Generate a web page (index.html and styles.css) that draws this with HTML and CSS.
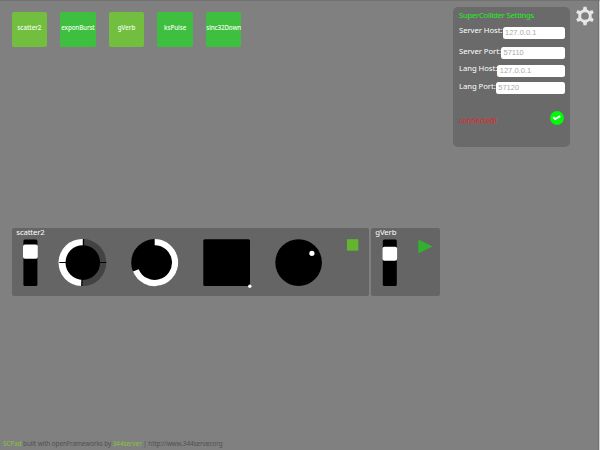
FILE: index.html
```
<!DOCTYPE html>
<html lang="en">
<head>
<meta charset="utf-8">
<title>SCPad</title>
<link rel="stylesheet" href="styles.css">
</head>
<body>
<main class="app">
  <header class="top">
    <nav class="synths">
      <button class="synth active"><span>scatter2</span></button>
      <button class="synth wide"><span>exponBurst</span></button>
      <button class="synth active"><span>gVerb</span></button>
      <button class="synth"><span>ksPulse</span></button>
      <button class="synth wide"><span>sinc32Down</span></button>
    </nav>
    <section class="settings">
      <h2>SuperCollider Settings</h2>
      <label class="field first"><span>Server Host:</span><b>127.0.0.1</b></label>
      <label class="field second"><span>Server Port:</span><b>57110</b></label>
      <label class="field third"><span>Lang Host:</span><b>127.0.0.1</b></label>
      <label class="field"><span>Lang Port:</span><b>57120</b></label>
      <div class="status">
        <span>connected!</span>
        <svg width="14" height="14" viewBox="0 0 14 14"><circle cx="7" cy="7" r="6.9" fill="#00fa08"/><path d="M3.2 6.2L5.2 8L10.3 5.2" fill="none" stroke="#fff" stroke-width="1.9"/></svg>
      </div>
    </section>
    <svg class="gear" width="18" height="20" viewBox="-9 -10 18 20">
      <g fill="#e6e6e6">
        <path id="tooth" d="M-2.1-5.5L-1.5-9.3H1.5L2.1-5.5Z"/>
        <use href="#tooth" transform="rotate(60)"/><use href="#tooth" transform="rotate(120)"/>
        <use href="#tooth" transform="rotate(180)"/><use href="#tooth" transform="rotate(240)"/>
        <use href="#tooth" transform="rotate(300)"/>
      </g>
      <circle r="5.3" fill="none" stroke="#e6e6e6" stroke-width="2.9"/>
    </svg>
  </header>
  <section class="modules">
    <article class="module scatter">
      <h3>scatter2</h3>
      <svg width="357" height="68" viewBox="0 0 357 68">
        <rect x="11.4" y="11.4" width="14" height="46.6" rx="1.5"/>
        <rect x="11" y="16.5" width="14.8" height="14.2" rx="2" fill="#fff"/>
        <g transform="translate(70.8 34.6)">
          <path d="M.7-23.5A23.5 23.5 0 0 1-.8 23.5V0Z" fill="#434343"/>
          <path d="M0-23.5A23.5 23.5 0 0 0-1.5 23.5L-.5 0Z" fill="#fff"/>
          <circle r="17.3"/>
          <path d="M-23.5-.1H23.5M.7-23.5V-16M-.7 16L-1 23.5" stroke="#000" stroke-width="1.2"/>
        </g>
        <g transform="translate(142.7 34.6)">
          <circle r="23.5"/>
          <path d="M0-20.4A20.4 20.4 0 1 1-18.9 7.7" fill="none" stroke="#fff" stroke-width="6.2"/>
        </g>
        <rect x="191.3" y="11.3" width="46.7" height="46.7" rx="1.5"/>
        <circle cx="237.8" cy="58.2" r="1.7" fill="#fff"/>
        <circle cx="286.6" cy="34.6" r="23.3"/>
        <circle cx="299.9" cy="25.4" r="2.6" fill="#fff"/>
        <rect x="335" y="11.2" width="11.3" height="11.5" fill="#62b52f"/>
      </svg>
    </article>
    <article class="module verb">
      <h3>gVerb</h3>
      <svg width="69" height="68" viewBox="0 0 69 68">
        <rect x="11.8" y="11.4" width="14" height="46.6" rx="1.5"/>
        <rect x="11.5" y="18.8" width="14.6" height="14" rx="2" fill="#fff"/>
        <path d="M47.3 11.4L61.6 18.4L47.3 25.5Z" fill="#32b02f"/>
      </svg>
    </article>
  </section>
  <footer><em>SCPad</em> built with openFrameworks by <em>344server</em> | http://www.344server.org</footer>
</main>
</body>
</html>
```
FILE: styles.css
```
* { box-sizing: border-box; }
body { margin: 0; background: #808080; font-family: "Noto Sans", sans-serif; }
.app {
  width: 600px; height: 450px; overflow: hidden;
  display: flex; flex-direction: column;
  border-top: 1px solid #717171;
  border-right: 1px solid #d2d2d2;
  box-shadow: inset -1px 0 #707070;
}
h2, h3 { margin: 0; font-weight: 400; }
.top { display: flex; height: 226.5px; padding: 6px 0 0 11.7px; }
.synths { display: flex; gap: 13.2px; padding-top: 5px; width: 441.3px; }
.synth {
  width: 35.4px; height: 35.4px; padding: 0 0 4.5px; border: 0; border-radius: 2px;
  display: flex; align-items: center; justify-content: center;
  background: #3fbf3f; color: #f4fff0;
  font: 500 6.2px "Noto Sans", sans-serif;
}
.synth.wide { letter-spacing: -.08px; }
.synth.active { background: #72bf3f; }
.settings {
  width: 117px; height: 140px; border-radius: 5px; background: #6a6a6a;
  padding: 3px 5.3px 0 6px; color: #fff; font-size: 7.7px; letter-spacing: -.04px;
}
.settings h2 { font-size: 7.7px; line-height: 11px; letter-spacing: -.24px; color: #1cf01c; white-space: nowrap; }
.field { display: flex; align-items: flex-start; height: 17.4px; line-height: 8px; white-space: nowrap; }
.field.first { margin-top: 5px; height: 20.5px; }
.field.second { height: 17.8px; }
.field b {
  flex: 1; height: 12.3px; margin-top: .5px; padding-left: 2.5px; border-radius: 2.5px;
  background: #fff; color: #aaa; font: 400 7.5px/12.5px "Liberation Sans", sans-serif; letter-spacing: 0;
}
.status { display: flex; justify-content: space-between; align-items: center; margin-top: 12px; padding-right: 1px; color: #f51d1d; font-size: 7.7px; letter-spacing: -.25px; }
.status span { padding-top: 4px; }
.gear { margin: -1px 0 0 5.6px; }
.modules { display: flex; gap: 2px; padding-left: 12px; }
.module { height: 68px; border-radius: 2px; background: #656565; display: grid; }
.module > * { grid-area: 1 / 1; }
.module h3 { padding-left: 4.3px; font-size: 7.8px; letter-spacing: -.15px; line-height: 9px; color: #fff; }
.scatter { width: 357px; }
.verb { width: 69px; }
footer { margin-top: auto; padding: 0 0 2.5px 3px; font-size: 6.4px; letter-spacing: -.09px; line-height: 8px; color: #505050; white-space: nowrap; }
footer em { font-style: normal; color: #86c43c; }
```
